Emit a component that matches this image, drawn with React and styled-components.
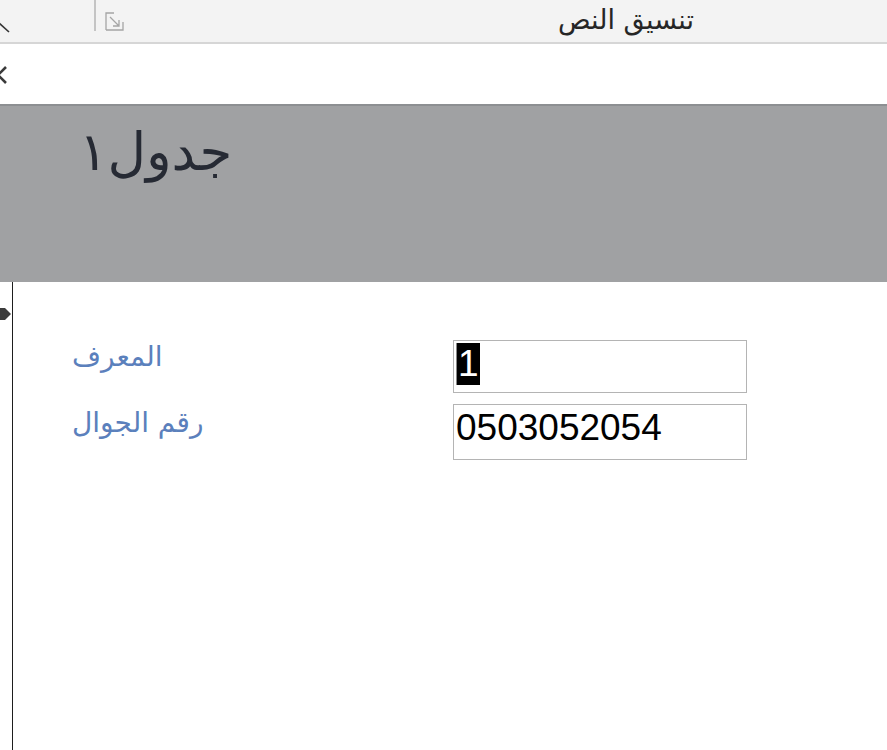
import React from "react";
import styled, { createGlobalStyle } from "styled-components";

const Global = createGlobalStyle`
  html, body { margin: 0; padding: 0; }
  body {
    width: 887px;
    height: 750px;
    overflow: hidden;
    background: #ffffff;
    font-family: "DejaVu Sans", "Liberation Sans", sans-serif;
  }
`;

const Page = styled.div`
  width: 887px;
  height: 750px;
  display: flex;
  flex-direction: column;
  overflow: hidden;
`;

const Ribbon = styled.div`
  height: 42px;
  flex: 0 0 42px;
  background: #f3f3f3;
  border-bottom: 2px solid #d6d6d6;
  display: flex;
  align-items: stretch;
`;

const CollapseBtn = styled.div`
  width: 12px;
  margin-left: -3px;
  display: flex;
  align-items: flex-end;
  padding-bottom: 9px;
`;

const Separator = styled.div`
  width: 2px;
  height: 31px;
  background: #c4c4c4;
  margin-left: 85px;
`;

const Launcher = styled.div`
  margin-left: 9px;
  padding-top: 12px;
`;

const GroupLabel = styled.div`
  margin-left: 434px;
  padding-top: 4px;
  font-size: 27px;
  color: #262626;
  direction: rtl;
  white-space: nowrap;
`;

const TabBar = styled.div`
  height: 60px;
  flex: 0 0 60px;
  background: #ffffff;
  display: flex;
  align-items: center;
`;

const CloseTab = styled.div`
  margin-left: -11px;
  margin-top: 2px;
  display: flex;
`;

const Header = styled.div`
  height: 176px;
  flex: 0 0 176px;
  background: #a0a1a3;
  border-top: 2px solid #8d8f92;
  padding-left: 79px;
`;

const Title = styled.h1`
  margin: 0;
  padding-top: 8px;
  font-weight: normal;
  font-size: 53px;
  line-height: 76px;
  color: #262a34;
  direction: rtl;
  display: inline-block;
  font-family: "DejaVu Sans", sans-serif;
`;

const Body = styled.div`
  flex: 1;
  display: flex;
`;

const Selector = styled.div`
  width: 12px;
  flex: 0 0 12px;
  border-right: 1px solid #1e1e1e;
  padding-top: 25px;
  display: flex;
  flex-direction: column;
  align-items: flex-start;
`;

const Detail = styled.div`
  flex: 1;
  padding-top: 58px;
  padding-left: 59px;
  display: grid;
  grid-template-columns: 381px 294px;
  grid-auto-rows: min-content;
  row-gap: 11px;
  align-content: start;
`;

const Label = styled.div`
  font-size: 28px;
  line-height: 34px;
  color: #5b80bc;
  direction: rtl;
  text-align: right;
  justify-self: start;
  padding-top: ${(p) => p.$top}px;
  font-family: "DejaVu Sans", sans-serif;
`;

const Field = styled.div`
  height: ${(p) => p.$h}px;
  box-sizing: border-box;
  border: 1px solid #b4b4b4;
  background: #fff;
  font-family: "Liberation Sans", Arial, sans-serif;
  font-size: 37px;
  line-height: 42px;
  color: #000;
  padding: 2px 0 0 2px;
  display: flex;
  align-items: flex-start;
`;

const Selected = styled.span`
  background: #000;
  color: #fff;
  padding: 0 3px 0 1px;
  line-height: 42px;
  border-left: 1px solid #888;
  letter-spacing: -2px;
`;

const Svg = styled.svg`
  display: block;
  flex: none;
`;

const ChevronUp = () => (
  <Svg width="14" height="12" viewBox="0 0 14 12">
    <path d="M1 1 L12 11" stroke="#333" strokeWidth="1.6" fill="none" />
  </Svg>
);

const LauncherIcon = () => (
  <Svg width="19" height="19" viewBox="0 0 19 19">
    <path d="M1 18 V1 H9 M1 18 H18 V10" stroke="#a5a5a5" strokeWidth="1.3" fill="none" />
    <path d="M5 5 L14 14 M14 8 V14 H8" stroke="#a5a5a5" strokeWidth="1.3" fill="none" />
  </Svg>
);

const CloseIcon = () => (
  <Svg width="18" height="18" viewBox="0 0 18 18">
    <path d="M1 1 L17 17 M17 1 L1 17" stroke="#3a3a3a" strokeWidth="2.6" fill="none" />
  </Svg>
);

const RecordArrow = () => (
  <Svg width="11" height="14" viewBox="0 0 11 14">
    <path d="M0 1 L5 1 L11 7 L5 13 L0 13 Z" fill="#3c3c3c" />
  </Svg>
);

export default function App() {
  return (
    <>
      <Global />
      <Page>
        <Ribbon>
          <CollapseBtn>
            <ChevronUp />
          </CollapseBtn>
          <Separator />
          <Launcher>
            <LauncherIcon />
          </Launcher>
          <GroupLabel>تنسيق النص</GroupLabel>
        </Ribbon>
        <TabBar>
          <CloseTab>
            <CloseIcon />
          </CloseTab>
        </TabBar>
        <Header>
          <Title>جدول١</Title>
        </Header>
        <Body>
          <Selector>
            <RecordArrow />
          </Selector>
          <Detail>
            <Label $top={0}>المعرف</Label>
            <Field $h={53}>
              <Selected>1</Selected>
            </Field>
            <Label $top={2}>رقم الجوال</Label>
            <Field $h={56}>0503052054</Field>
          </Detail>
        </Body>
      </Page>
    </>
  );
}
